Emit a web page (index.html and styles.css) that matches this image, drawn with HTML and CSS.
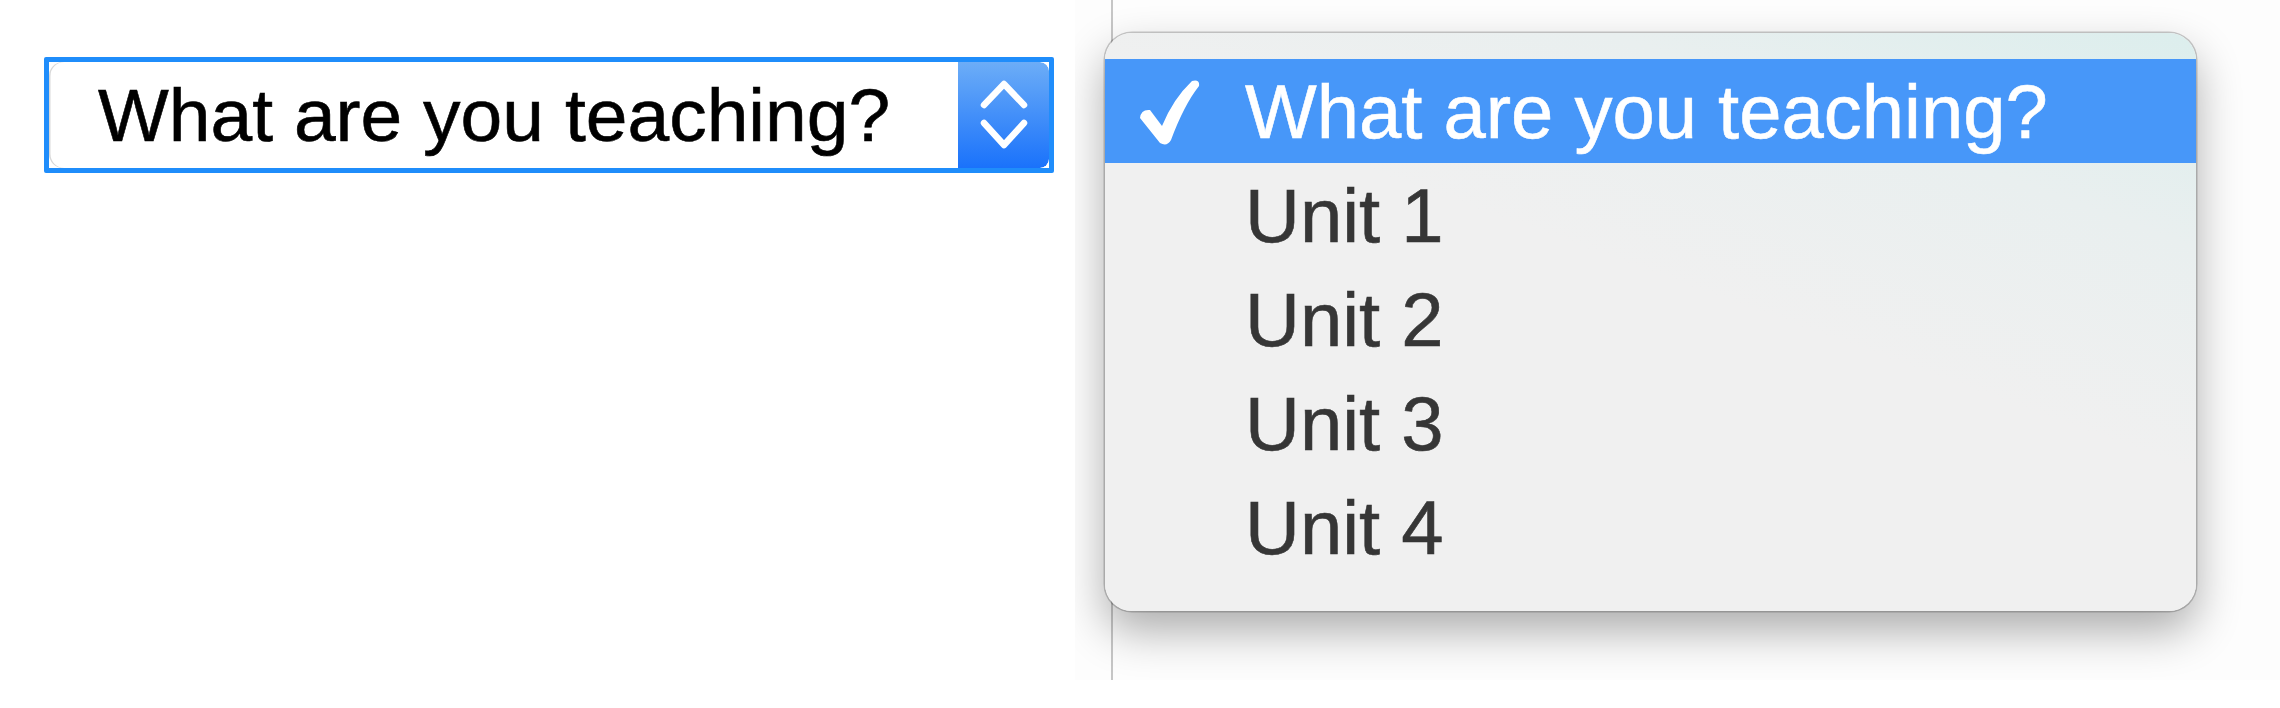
FILE: index.html
```html
<!DOCTYPE html>
<html>
<head>
<meta charset="utf-8">
<link rel="stylesheet" href="styles.css">
</head>
<body>
<div class="left">
  <div class="select-ring">
    <div class="select-inner">
      <div class="select-label">What are you teaching?</div>
      <div class="stepper">
        <svg width="91" height="106" viewBox="0 0 91 106">
          <polyline points="26,43 46,22 66,43" fill="none" stroke="#fff" stroke-width="6.5" stroke-linecap="round" stroke-linejoin="round"/>
          <polyline points="26,61 46,83 66,61" fill="none" stroke="#fff" stroke-width="6.5" stroke-linecap="round" stroke-linejoin="round"/>
        </svg>
      </div>
    </div>
  </div>
</div>
<div class="screen">
  <div class="menu">
    <div class="item selected">
      <span class="check">
        <svg width="60" height="66" viewBox="0 0 60 66">
          <path d="M0,38 Q1,29 10,30 L22,46 Q33,19 52,1 Q60,-1 59,6 Q44,25 31,60 Q27,67 20,63 Z" fill="#fff"/>
        </svg>
      </span>
      <span class="label">What are you teaching?</span>
    </div>
    <div class="item"><span class="check"></span><span class="label">Unit 1</span></div>
    <div class="item"><span class="check"></span><span class="label">Unit 2</span></div>
    <div class="item"><span class="check"></span><span class="label">Unit 3</span></div>
    <div class="item"><span class="check"></span><span class="label">Unit 4</span></div>
  </div>
</div>
</body>
</html>
```
FILE: styles.css
```css
html, body {
  margin: 0;
  padding: 0;
  background: #ffffff;
}
body {
  width: 2280px;
  height: 708px;
  display: flex;
  align-items: flex-start;
  overflow: hidden;
  font-family: "Liberation Sans", Arial, sans-serif;
}
.left {
  width: 1075px;
  flex-shrink: 0;
  box-sizing: border-box;
  padding: 57px 0 0 44px;
}
.select-ring {
  width: 1010px;
  height: 116px;
  box-sizing: border-box;
  border: 5px solid #1f8dfb;
  border-radius: 2px;
  background: #ffffff;
  display: flex;
}
.select-inner {
  flex: 1;
  display: flex;
  background: #ffffff;
  border-radius: 14px 9px 9px 14px;
  overflow: hidden;
  box-shadow: inset 1.5px 0 0 #d8d8d8;
}
.select-label {
  flex: 1;
  display: flex;
  align-items: center;
  padding-left: 49px;
  font-size: 75px;
  color: #000000;
  -webkit-text-stroke: 0.6px #000000;
  white-space: nowrap;
}
.stepper {
  width: 91px;
  flex-shrink: 0;
  background: linear-gradient(#6cadf7, #1a72fb);
  border-radius: 0 9px 9px 0;
  display: flex;
  align-items: center;
  justify-content: center;
}
.stepper svg {
  display: block;
}
.screen {
  flex: 1;
  height: 680px;
  position: relative;
  overflow: hidden;
  background: #fdfdfd;
  box-sizing: border-box;
  padding: 33px 0 0 30px;
}
.screen::before {
  content: "";
  position: absolute;
  left: 36px;
  top: 0;
  bottom: 0;
  width: 2px;
  background: #c6c6c6;
}
.menu {
  position: relative;
  z-index: 1;
  width: 1091px;
  height: 578px;
  box-sizing: border-box;
  padding: 26px 0 32px;
  border-radius: 27px;
  overflow: hidden;
  background: linear-gradient(200deg, #dceeed 0%, #e9efef 22%, #f0f0f0 45%, #f0f0f0 100%);
  box-shadow: 0 0 0 1.5px rgba(0, 0, 0, 0.2), 0 20px 45px rgba(0, 0, 0, 0.32);
}
.item {
  height: 104px;
  display: flex;
  align-items: center;
  font-size: 76px;
  color: #363636;
  -webkit-text-stroke: 0.6px #363636;
  white-space: nowrap;
}
.item.selected {
  background: #4797f9;
  color: #ffffff;
  -webkit-text-stroke: 0.6px #ffffff;
}
.check {
  width: 140px;
  flex-shrink: 0;
  box-sizing: border-box;
  padding-left: 35px;
  display: flex;
  align-items: center;
}
.check svg {
  display: block;
  margin-top: 4px;
}
```
